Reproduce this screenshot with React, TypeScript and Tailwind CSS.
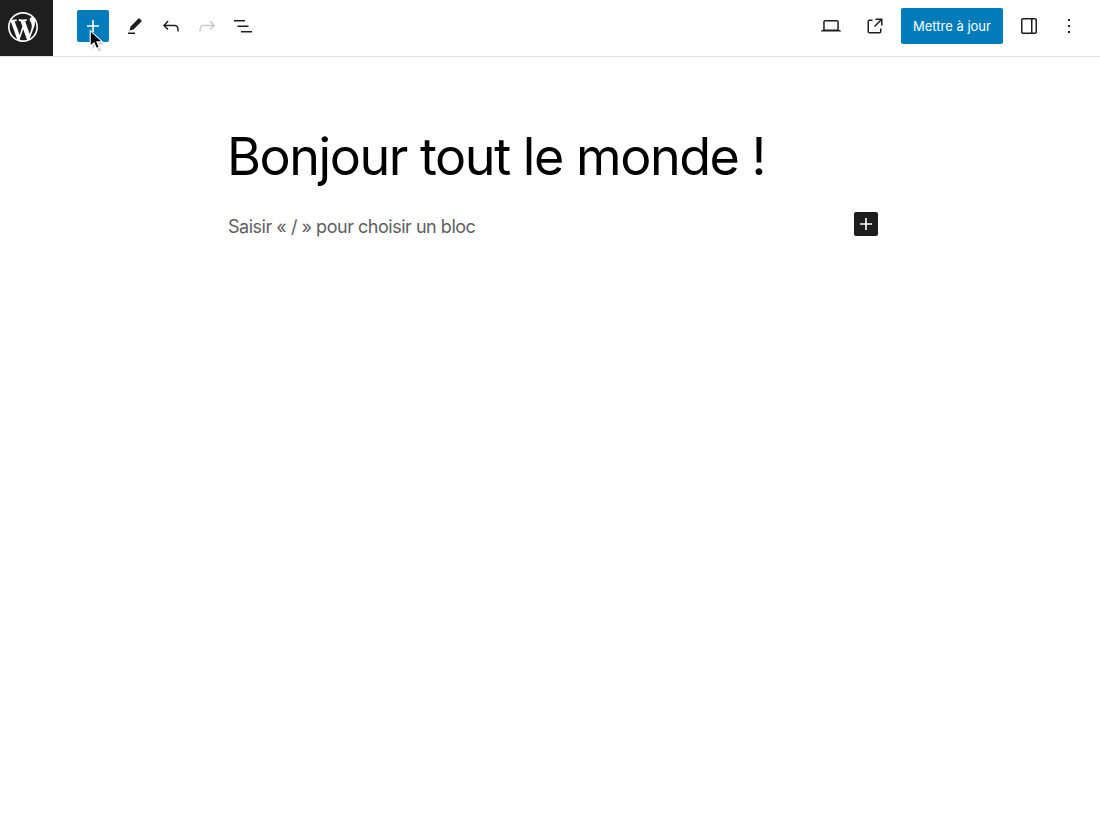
const Ico = ({ d, c = "#1e1e1e", s = 24 }: { d: string; c?: string; s?: number }) => (
  <svg width={s} height={s} viewBox="0 0 24 24" fill={c} aria-hidden="true">
    <path d={d} />
  </svg>
);

const PLUS = "M18 11.2h-5.2V6h-1.6v5.2H6v1.6h5.2V18h1.6v-5.2H18z";
const WP =
  "M20 10c0-5.52-4.48-10-10-10S0 4.48 0 10s4.48 10 10 10 10-4.48 10-10zM7.78 15.37L4.37 6.22c.55-.02 1.17-.08 1.17-.08.5-.06.44-1.13-.06-1.11 0 0-1.45.11-2.37.11-.18 0-.37 0-.58-.01C4.12 2.69 6.87 1.11 10 1.11c2.33 0 4.45.87 6.05 2.34-.68-.11-1.65.39-1.65 1.58 0 .74.45 1.36.9 2.1.35.61.55 1.36.55 2.46 0 1.49-1.4 5-1.4 5l-3.03-8.37c.54-.02.82-.17.82-.17.5-.05.44-1.25-.06-1.22 0 0-1.44.12-2.38.12-.87 0-2.33-.12-2.33-.12-.5-.03-.56 1.2-.06 1.22l.92.08 1.26 3.41zM17.41 10c.24-.64.74-1.87.43-4.25.7 1.29 1.05 2.71 1.05 4.25 0 3.29-1.73 6.24-4.4 7.78.97-2.59 1.94-5.2 2.92-7.78zM6.1 18.09C3.12 16.65 1.11 13.53 1.11 10c0-1.3.23-2.48.72-3.59C3.25 10.3 4.67 14.2 6.1 18.09zm4.03-6.63l2.58 6.98c-.86.29-1.76.45-2.71.45-.79 0-1.57-.11-2.29-.33.81-2.38 1.62-4.74 2.42-7.1z";

const Tool = ({ d, c, className = "" }: { d: string; c?: string; className?: string }) => (
  <button className={`flex h-8 w-8 items-center justify-center ${className}`}>
    <Ico d={d} c={c} />
  </button>
);

export default function App() {
  return (
    <div className="relative h-[821px] w-[1100px] overflow-hidden bg-[#fefefe] font-['Inter',sans-serif] text-[#1e1e1e]">
      <header className="flex h-[57px] items-start border-b border-[#e0e0e0] bg-white">
        <div className="h-[56px] w-[53px] bg-[#1e1e1e] pl-2 pt-3">
          <svg width="30" height="30" viewBox="0 0 20 20" fill="#fff" aria-hidden="true">
            <path d={WP} />
          </svg>
        </div>
        <button className="ml-6 mt-2.5 flex h-8 w-8 items-center justify-center rounded-[2px] bg-[#007cba]">
          <Ico d={PLUS} c="#fff" />
        </button>
        <div className="ml-[10px] mt-2.5 flex items-center gap-1">
          <Tool d="m19 7-3-3-8.5 8.5-1 4 4-1L19 7Zm-7 11.5H5V20h7v-1.5Z" />
          <Tool d="M18.3 11.7c-.6-.6-1.4-.9-2.3-.9H6.7l2.9-3.3-1.1-1-4.5 5L8.5 16l1-1-2.7-2.7H16c.5 0 .9.2 1.3.5 1 1 1 3.4 1 4.5v.3h1.5v-.2c0-1.5 0-4.3-1.5-5.7z" />
          <Tool c="#cccccc" d="M15.6 6.5l-1.1 1 2.9 3.3H8c-.9 0-1.7.3-2.3.9-1.4 1.5-1.4 4.2-1.4 5.6v.2h1.5v-.3c0-1.1 0-3.5 1-4.5.3-.3.7-.5 1.3-.5h9.2L14.5 15l1.1 1.1 4.6-4.6-4.6-5z" />
          <Tool d="M3 6h11v1.5H3V6Zm3.5 5.5h11V13h-11v-1.5ZM21 17H10v1.5h11V17Z" />
        </div>
        <div className="ml-auto mr-[15px] mt-2 flex items-center">
          <Tool d="M20.5 16h-.7V8c0-1.1-.9-2-2-2H6.2c-1.1 0-2 .9-2 2v8h-.7c-.8 0-1.5.7-1.5 1.5h20c0-.8-.7-1.5-1.5-1.5zM5.7 8c0-.3.2-.5.5-.5h11.6c.3 0 .5.2.5.5v7.6H5.7V8z" />
          <Tool className="ml-3" d="M19.5 4.5h-7V6h4.44l-5.97 5.97 1.06 1.06L18 7.06v4.44h1.5v-7Zm-13 1a2 2 0 0 0-2 2v10a2 2 0 0 0 2 2h10a2 2 0 0 0 2-2v-3H17v3a.5.5 0 0 1-.5.5h-10a.5.5 0 0 1-.5-.5v-10a.5.5 0 0 1 .5-.5h3V5.5h-3Z" />
          <button className="ml-2.5 h-9 w-[102px] rounded-[2px] bg-[#007cba] pt-0.5 text-[13px] text-white">Mettre à jour</button>
          <Tool className="ml-2.5" d="M18 4H6c-1.1 0-2 .9-2 2v12c0 1.1.9 2 2 2h12c1.1 0 2-.9 2-2V6c0-1.1-.9-2-2-2zm-4 14.5H6c-.3 0-.5-.2-.5-.5V6c0-.3.2-.5.5-.5h8v13zm4.5-.5c0 .3-.2.5-.5.5h-2.5v-13H18c.3 0 .5.2.5.5v12z" />
          <Tool className="ml-2" d="M13 19h-2v-2h2v2zm0-6h-2v-2h2v2zm0-6h-2V5h2v2z" />
        </div>
      </header>
      <main className="mx-auto w-[644px] pt-[65px]">
        <h1 className="-ml-px text-[52px] leading-[70px] font-normal tracking-[-1.45px] text-black">Bonjour tout le monde !</h1>
        <div className="mt-5 flex h-6 items-center justify-between">
          <p className="relative top-[3px] text-[18px] leading-6 tracking-[-0.48px] text-[#5f5f5f]">Saisir « / » pour choisir un bloc</p>
          <button className="-mr-1.5 flex h-6 w-6 items-center justify-center rounded-[2px] bg-[#1e1e1e]">
            <Ico d={PLUS} c="#fff" />
          </button>
        </div>
      </main>
      <svg className="absolute left-[88px] top-[29px]" width="20" height="24" viewBox="0 0 18 21.6" aria-hidden="true">
        <path d="M3 3l0 14 3.4-3 2.2 5 2.6-1.1-2.2-5 4.6-.2z" fill="#000" fillOpacity=".18" transform="translate(.8 1.2)" />
        <path d="M2 1.5v14l3.4-3 2.2 5 2.6-1.1-2.2-5 4.6-.2z" fill="#000" stroke="#fff" strokeWidth="1" />
      </svg>
    </div>
  );
}
